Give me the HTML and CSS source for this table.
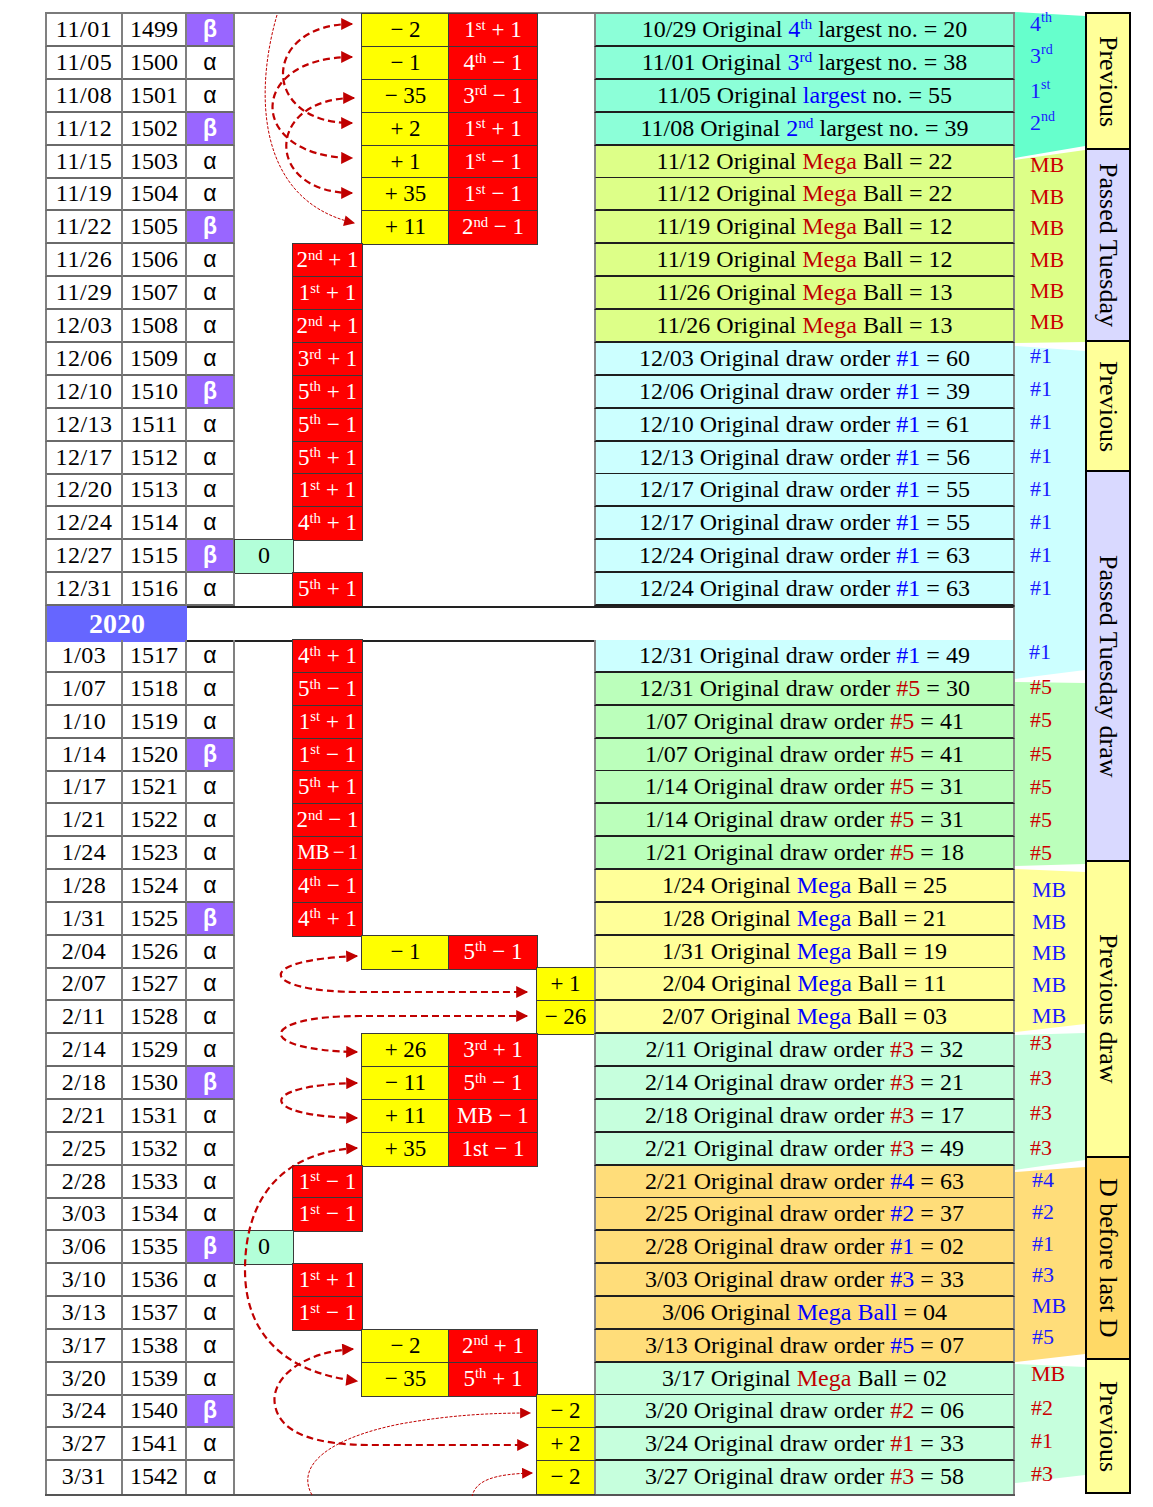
FILE: index.html
```html
<!DOCTYPE html>
<html>
<head>
<meta charset="utf-8">
<title>Draw table</title>
<link rel="stylesheet" href="styles.css">
</head>
<body>
<div class="page">
  <div class="table">
    <div class="sec1">
      <div class="r"><div class="d">11/01</div><div class="n">1499</div><div class="g b">β</div><div class="y6">− 2</div><div class="k7">1<sup>st</sup> + 1</div><div class="t tq">10/29 Original <span class="bl">4<sup>th</sup></span> largest no. = 20</div></div>
      <div class="r"><div class="d">11/05</div><div class="n">1500</div><div class="g">α</div><div class="y6">− 1</div><div class="k7">4<sup>th</sup> − 1</div><div class="t tq">11/01 Original <span class="bl">3<sup>rd</sup></span> largest no. = 38</div></div>
      <div class="r"><div class="d">11/08</div><div class="n">1501</div><div class="g">α</div><div class="y6">− 35</div><div class="k7">3<sup>rd</sup> − 1</div><div class="t tq">11/05 Original <span class="bl">largest</span> no. = 55</div></div>
      <div class="r"><div class="d">11/12</div><div class="n">1502</div><div class="g b">β</div><div class="y6">+ 2</div><div class="k7">1<sup>st</sup> + 1</div><div class="t tq">11/08 Original <span class="bl">2<sup>nd</sup></span> largest no. = 39</div></div>
      <div class="r"><div class="d">11/15</div><div class="n">1503</div><div class="g">α</div><div class="y6">+ 1</div><div class="k7">1<sup>st</sup> − 1</div><div class="t tl">11/12 Original <span class="rd">Mega</span> Ball = 22</div></div>
      <div class="r"><div class="d">11/19</div><div class="n">1504</div><div class="g">α</div><div class="y6">+ 35</div><div class="k7">1<sup>st</sup> − 1</div><div class="t tl">11/12 Original <span class="rd">Mega</span> Ball = 22</div></div>
      <div class="r"><div class="d">11/22</div><div class="n">1505</div><div class="g b">β</div><div class="y6">+ 11</div><div class="k7">2<sup>nd</sup> − 1</div><div class="t tl">11/19 Original <span class="rd">Mega</span> Ball = 12</div></div>
      <div class="r"><div class="d">11/26</div><div class="n">1506</div><div class="g">α</div><div class="k5">2<sup>nd</sup> + 1</div><div class="t tl">11/19 Original <span class="rd">Mega</span> Ball = 12</div></div>
      <div class="r"><div class="d">11/29</div><div class="n">1507</div><div class="g">α</div><div class="k5">1<sup>st</sup> + 1</div><div class="t tl">11/26 Original <span class="rd">Mega</span> Ball = 13</div></div>
      <div class="r"><div class="d">12/03</div><div class="n">1508</div><div class="g">α</div><div class="k5">2<sup>nd</sup> + 1</div><div class="t tl">11/26 Original <span class="rd">Mega</span> Ball = 13</div></div>
      <div class="r"><div class="d">12/06</div><div class="n">1509</div><div class="g">α</div><div class="k5">3<sup>rd</sup> + 1</div><div class="t tc">12/03 Original draw order <span class="bl">#1</span> = 60</div></div>
      <div class="r"><div class="d">12/10</div><div class="n">1510</div><div class="g b">β</div><div class="k5">5<sup>th</sup> + 1</div><div class="t tc">12/06 Original draw order <span class="bl">#1</span> = 39</div></div>
      <div class="r"><div class="d">12/13</div><div class="n">1511</div><div class="g">α</div><div class="k5">5<sup>th</sup> − 1</div><div class="t tc">12/10 Original draw order <span class="bl">#1</span> = 61</div></div>
      <div class="r"><div class="d">12/17</div><div class="n">1512</div><div class="g">α</div><div class="k5">5<sup>th</sup> + 1</div><div class="t tc">12/13 Original draw order <span class="bl">#1</span> = 56</div></div>
      <div class="r"><div class="d">12/20</div><div class="n">1513</div><div class="g">α</div><div class="k5">1<sup>st</sup> + 1</div><div class="t tc">12/17 Original draw order <span class="bl">#1</span> = 55</div></div>
      <div class="r"><div class="d">12/24</div><div class="n">1514</div><div class="g">α</div><div class="k5">4<sup>th</sup> + 1</div><div class="t tc">12/17 Original draw order <span class="bl">#1</span> = 55</div></div>
      <div class="r"><div class="d">12/27</div><div class="n">1515</div><div class="g b">β</div><div class="z">0</div><div class="t tc">12/24 Original draw order <span class="bl">#1</span> = 63</div></div>
      <div class="r"><div class="d">12/31</div><div class="n">1516</div><div class="g">α</div><div class="k5">5<sup>th</sup> + 1</div><div class="t tc">12/24 Original draw order <span class="bl">#1</span> = 63</div></div>
    </div>
    <div class="yr"><div class="yb">2020</div><div class="yw"></div></div>
    <div class="sec2">
      <div class="r"><div class="d">1/03</div><div class="n">1517</div><div class="g">α</div><div class="k5">4<sup>th</sup> + 1</div><div class="t tc">12/31 Original draw order <span class="bl">#1</span> = 49</div></div>
      <div class="r"><div class="d">1/07</div><div class="n">1518</div><div class="g">α</div><div class="k5">5<sup>th</sup> − 1</div><div class="t tg">12/31 Original draw order <span class="rd">#5</span> = 30</div></div>
      <div class="r"><div class="d">1/10</div><div class="n">1519</div><div class="g">α</div><div class="k5">1<sup>st</sup> + 1</div><div class="t tg">1/07 Original draw order <span class="rd">#5</span> = 41</div></div>
      <div class="r"><div class="d">1/14</div><div class="n">1520</div><div class="g b">β</div><div class="k5">1<sup>st</sup> − 1</div><div class="t tg">1/07 Original draw order <span class="rd">#5</span> = 41</div></div>
      <div class="r"><div class="d">1/17</div><div class="n">1521</div><div class="g">α</div><div class="k5">5<sup>th</sup> + 1</div><div class="t tg">1/14 Original draw order <span class="rd">#5</span> = 31</div></div>
      <div class="r"><div class="d">1/21</div><div class="n">1522</div><div class="g">α</div><div class="k5">2<sup>nd</sup> − 1</div><div class="t tg">1/14 Original draw order <span class="rd">#5</span> = 31</div></div>
      <div class="r"><div class="d">1/24</div><div class="n">1523</div><div class="g">α</div><div class="k5 mb">MB − 1</div><div class="t tg">1/21 Original draw order <span class="rd">#5</span> = 18</div></div>
      <div class="r"><div class="d">1/28</div><div class="n">1524</div><div class="g">α</div><div class="k5">4<sup>th</sup> − 1</div><div class="t ty">1/24 Original <span class="bl">Mega</span> Ball = 25</div></div>
      <div class="r"><div class="d">1/31</div><div class="n">1525</div><div class="g b">β</div><div class="k5">4<sup>th</sup> + 1</div><div class="t ty">1/28 Original <span class="bl">Mega</span> Ball = 21</div></div>
      <div class="r"><div class="d">2/04</div><div class="n">1526</div><div class="g">α</div><div class="y6">− 1</div><div class="k7">5<sup>th</sup> − 1</div><div class="t ty">1/31 Original <span class="bl">Mega</span> Ball = 19</div></div>
      <div class="r"><div class="d">2/07</div><div class="n">1527</div><div class="g">α</div><div class="y8">+ 1</div><div class="t ty">2/04 Original <span class="bl">Mega</span> Ball = 11</div></div>
      <div class="r"><div class="d">2/11</div><div class="n">1528</div><div class="g">α</div><div class="y8">− 26</div><div class="t ty">2/07 Original <span class="bl">Mega</span> Ball = 03</div></div>
      <div class="r"><div class="d">2/14</div><div class="n">1529</div><div class="g">α</div><div class="y6">+ 26</div><div class="k7">3<sup>rd</sup> + 1</div><div class="t tm">2/11 Original draw order <span class="rd">#3</span> = 32</div></div>
      <div class="r"><div class="d">2/18</div><div class="n">1530</div><div class="g b">β</div><div class="y6">− 11</div><div class="k7">5<sup>th</sup> − 1</div><div class="t tm">2/14 Original draw order <span class="rd">#3</span> = 21</div></div>
      <div class="r"><div class="d">2/21</div><div class="n">1531</div><div class="g">α</div><div class="y6">+ 11</div><div class="k7">MB − 1</div><div class="t tm">2/18 Original draw order <span class="rd">#3</span> = 17</div></div>
      <div class="r"><div class="d">2/25</div><div class="n">1532</div><div class="g">α</div><div class="y6">+ 35</div><div class="k7">1st − 1</div><div class="t tm">2/21 Original draw order <span class="rd">#3</span> = 49</div></div>
      <div class="r"><div class="d">2/28</div><div class="n">1533</div><div class="g">α</div><div class="k5">1<sup>st</sup> − 1</div><div class="t to">2/21 Original draw order <span class="bl">#4</span> = 63</div></div>
      <div class="r"><div class="d">3/03</div><div class="n">1534</div><div class="g">α</div><div class="k5">1<sup>st</sup> − 1</div><div class="t to">2/25 Original draw order <span class="bl">#2</span> = 37</div></div>
      <div class="r"><div class="d">3/06</div><div class="n">1535</div><div class="g b">β</div><div class="z">0</div><div class="t to">2/28 Original draw order <span class="bl">#1</span> = 02</div></div>
      <div class="r"><div class="d">3/10</div><div class="n">1536</div><div class="g">α</div><div class="k5">1<sup>st</sup> + 1</div><div class="t to">3/03 Original draw order <span class="bl">#3</span> = 33</div></div>
      <div class="r"><div class="d">3/13</div><div class="n">1537</div><div class="g">α</div><div class="k5">1<sup>st</sup> − 1</div><div class="t to">3/06 Original <span class="bl">Mega Ball</span> = 04</div></div>
      <div class="r"><div class="d">3/17</div><div class="n">1538</div><div class="g">α</div><div class="y6">− 2</div><div class="k7">2<sup>nd</sup> + 1</div><div class="t to">3/13 Original draw order <span class="bl">#5</span> = 07</div></div>
      <div class="r"><div class="d">3/20</div><div class="n">1539</div><div class="g">α</div><div class="y6">− 35</div><div class="k7">5<sup>th</sup> + 1</div><div class="t tm">3/17 Original <span class="rd">Mega</span> Ball = 02</div></div>
      <div class="r"><div class="d">3/24</div><div class="n">1540</div><div class="g b">β</div><div class="y8">− 2</div><div class="t tm">3/20 Original draw order <span class="rd">#2</span> = 06</div></div>
      <div class="r"><div class="d">3/27</div><div class="n">1541</div><div class="g">α</div><div class="y8">+ 2</div><div class="t tm">3/24 Original draw order <span class="rd">#1</span> = 33</div></div>
      <div class="r"><div class="d">3/31</div><div class="n">1542</div><div class="g">α</div><div class="y8">− 2</div><div class="t tm">3/27 Original draw order <span class="rd">#3</span> = 58</div></div>
    </div>
  </div>

  <div class="fan">
    <svg width="70" height="1482" viewBox="1015 12 70 1482">
      <polygon fill="#66ffcc" points="1015,12 1085,16 1085,146 1015,158"/>
      <polygon fill="#ddff88" points="1015,160 1085,150 1085,342 1015,343"/>
      <polygon fill="#ccffff" points="1015,346 1085,351 1085,670 1015,679"/>
      <polygon fill="#bbffbb" points="1015,682 1085,683 1085,864 1015,866"/>
      <polygon fill="#ffff99" points="1015,869 1085,872 1085,1024 1015,1032"/>
      <polygon fill="#c6ffdd" points="1015,1035 1085,1033 1085,1160 1015,1170"/>
      <polygon fill="#ffdd7a" points="1015,1172 1085,1167 1085,1354 1015,1362"/>
      <polygon fill="#c6ffdd" points="1015,1364 1085,1367 1085,1475 1015,1483"/>
      <g class="ab blue">
        <text x="1030" y="31">4<tspan class="su" dy="-9">th</tspan></text>
        <text x="1030" y="63">3<tspan class="su" dy="-9">rd</tspan></text>
        <text x="1030" y="98">1<tspan class="su" dy="-9">st</tspan></text>
        <text x="1030" y="130">2<tspan class="su" dy="-9">nd</tspan></text>
      </g>
      <g class="ab red">
        <text x="1030" y="172">MB</text>
        <text x="1030" y="204">MB</text>
        <text x="1030" y="235">MB</text>
        <text x="1030" y="267">MB</text>
        <text x="1030" y="298">MB</text>
        <text x="1030" y="329">MB</text>
      </g>
      <g class="ab blue">
        <text x="1030" y="363">#1</text>
        <text x="1030" y="396">#1</text>
        <text x="1030" y="429">#1</text>
        <text x="1030" y="463">#1</text>
        <text x="1030" y="496">#1</text>
        <text x="1030" y="529">#1</text>
        <text x="1030" y="562">#1</text>
        <text x="1030" y="595">#1</text>
        <text x="1029" y="659">#1</text>
      </g>
      <g class="ab red">
        <text x="1030" y="694">#5</text>
        <text x="1030" y="727">#5</text>
        <text x="1030" y="761">#5</text>
        <text x="1030" y="794">#5</text>
        <text x="1030" y="827">#5</text>
        <text x="1030" y="860">#5</text>
      </g>
      <g class="ab blue">
        <text x="1032" y="897">MB</text>
        <text x="1032" y="929">MB</text>
        <text x="1032" y="960">MB</text>
        <text x="1032" y="992">MB</text>
        <text x="1032" y="1023">MB</text>
      </g>
      <g class="ab red">
        <text x="1030" y="1050">#3</text>
        <text x="1030" y="1085">#3</text>
        <text x="1030" y="1120">#3</text>
        <text x="1030" y="1155">#3</text>
      </g>
      <g class="ab blue">
        <text x="1032" y="1187">#4</text>
        <text x="1032" y="1219">#2</text>
        <text x="1032" y="1251">#1</text>
        <text x="1032" y="1282">#3</text>
        <text x="1032" y="1313">MB</text>
        <text x="1032" y="1344">#5</text>
      </g>
      <g class="ab red">
        <text x="1031" y="1381">MB</text>
        <text x="1031" y="1415">#2</text>
        <text x="1031" y="1448">#1</text>
        <text x="1031" y="1481">#3</text>
      </g>
    </svg>
  </div>

  <div class="labels">
    <div class="lb ly h1"><span>Previous</span></div>
    <div class="lb lv h2"><span>Passed Tuesday</span></div>
    <div class="lb ly h3"><span>Previous</span></div>
    <div class="lb lv h4"><span>Passed Tuesday draw</span></div>
    <div class="lb ly h5"><span>Previous draw</span></div>
    <div class="lb lo h6"><span>D before last D</span></div>
    <div class="lb ly h7"><span>Previous</span></div>
  </div>

  <svg class="arrows" width="1153" height="1507" viewBox="0 0 1153 1507">
    <defs>
      <marker id="ah" viewBox="0 0 10 10" refX="9" refY="5" markerWidth="14" markerHeight="12" markerUnits="userSpaceOnUse" orient="auto-start-reverse">
        <path class="head" d="M0,0 L10,5 L0,10 z"/>
      </marker>
      <marker id="ahs" viewBox="0 0 10 10" refX="9" refY="5" markerWidth="12" markerHeight="11" markerUnits="userSpaceOnUse" orient="auto-start-reverse">
        <path class="head" d="M0,0 L10,5 L0,10 z"/>
      </marker>
    </defs>
    <g class="thick">
      <path d="M 352 24 C 260 24, 260 124, 352 123"/>
      <path d="M 352 57 C 246 57, 246 157, 352 158"/>
      <path d="M 354 98 C 264 98, 264 193, 352 193"/>
      <path d="M 357 956 C 250 960, 260 992, 360 992 L 527 992"/>
      <path d="M 527 1016 L 360 1016 C 258 1016, 252 1050, 357 1052"/>
      <path d="M 357 1083 C 256 1085, 256 1116, 357 1118"/>
      <path d="M 357 1148 C 280 1152, 245 1200, 245 1270 C 245 1330, 280 1372, 357 1381"/>
      <path d="M 353 1349 C 300 1352, 270 1380, 275 1405 C 280 1435, 320 1445, 370 1445 L 528 1445"/>
    </g>
    <g class="thin">
      <path d="M 277 15 C 255 90, 255 200, 354 223"/>
      <path d="M 312 1495 C 295 1465, 330 1438, 400 1424 C 450 1415, 490 1413, 530 1413"/>
      <path d="M 472 1497 C 475 1480, 495 1474, 532 1473"/>
    </g>
  </svg>
</div>
</body>
</html>
```

FILE: styles.css
```css
body {
  margin: 0;
  background: #ffffff;
  font-family: "Liberation Serif", "DejaVu Serif", serif;
  color: #000;
}

.page {
  position: relative;
  display: flex;
  align-items: flex-start;
  padding: 12px 0 0 45px;
}

.table {
  width: 970px;
  flex: none;
  border-top: 2px solid #7a7a7a;
  border-bottom: 2px solid #555;
}

.r {
  display: grid;
  grid-template-columns: 78px 64px 48px 58px 69px 87px 88px 57px 421px;
  height: 32.9px;
}

.sec2 .r {
  height: 32.85px;
}

.sec2 .r:last-child > .d,
.sec2 .r:last-child > .n,
.sec2 .r:last-child > .g,
.sec2 .r:last-child > .t {
  border-bottom: 0;
}

.r > * {
  box-sizing: border-box;
  text-align: center;
  line-height: 31px;
  font-size: 24px;
  white-space: nowrap;
  grid-row: 1;
}

sup {
  font-size: 0.64em;
  vertical-align: baseline;
  position: relative;
  top: -0.5em;
  line-height: 0;
}

.d {
  grid-column: 1;
  border-left: 2px solid #808080;
  letter-spacing: 0.5px;
}

.n {
  grid-column: 2;
}

.g {
  grid-column: 3;
  font-family: "Liberation Sans", "DejaVu Sans", sans-serif;
  font-size: 23px;
}

.d,
.n,
.g {
  border-right: 2px solid #808080;
  border-bottom: 2px solid #6a6a6a;
}

.g.b {
  background: #9966ff;
  color: #ffffff;
  font-weight: bold;
}

.z {
  grid-column: 4;
  background: #b3ffd9;
}

.k5 {
  grid-column: 5;
}

.y6 {
  grid-column: 6;
}

.k7 {
  grid-column: 7;
}

.y8 {
  grid-column: 8;
}

.k5,
.k7 {
  background: #ff0000;
  color: #ffffff;
  font-size: 23px;
}

.y6,
.y8 {
  background: #ffff00;
  font-size: 23px;
}

.r > .mb {
  letter-spacing: -0.5px;
  word-spacing: -1px;
  font-size: 21px;
}

.z,
.k5,
.y6,
.k7,
.y8 {
  box-shadow: 0 0 0 1px #3a3a3a;
}

.t {
  grid-column: 9;
  border-left: 2px solid #888888;
  border-right: 2px solid #888888;
  border-bottom: 2px solid #1e1e1e;
}

.tq { background: #8cffd8; }
.tl { background: #ddff88; }
.tc { background: #ccffff; }
.tg { background: #bbffbb; }
.ty { background: #ffff99; }
.tm { background: #c6ffdd; }
.to { background: #ffdd7a; }

.bl { color: #0000ff; }
.rd { color: #c00000; }

/* 2020 row */
.yr {
  display: grid;
  grid-template-columns: 142px 828px;
  height: 34px;
}

.yb {
  box-sizing: border-box;
  background: #6666ff;
  color: #ffffff;
  font-weight: bold;
  font-size: 28px;
  text-align: center;
  line-height: 36px;
  border-left: 2px solid #808080;
}

.yw {
  box-sizing: border-box;
  border-top: 2px solid #222;
  border-bottom: 2px solid #222;
  border-right: 2px solid #888888;
}

/* fan column */
.fan {
  width: 70px;
  height: 1482px;
  flex: none;
}

.fan svg {
  display: block;
  overflow: visible;
}

.ab {
  font-family: "Liberation Serif", "DejaVu Serif", serif;
  font-size: 22px;
}

.ab.blue { fill: #1a1aff; }
.ab.red { fill: #cc0000; }

.su {
  font-size: 14px;
}

/* labels */
.labels {
  width: 46px;
  flex: none;
  display: flex;
  flex-direction: column;
}

.lb {
  box-sizing: border-box;
  border: 2px solid #000;
  display: flex;
  align-items: center;
  justify-content: center;
  font-size: 26px;
}

.lb + .lb {
  border-top: 0;
}

.lb span {
  writing-mode: vertical-rl;
  white-space: nowrap;
}

.ly { background: #ffff99; }
.lv { background: #d9d9ff; }
.lo { background: #ffd966; }

.h1 { height: 138px; }
.h2 { height: 192px; }
.h3 { height: 130px; }
.h4 { height: 390px; }
.h5 { height: 296px; }
.h6 { height: 202px; }
.h7 { height: 134px; }

/* arrows overlay */
.arrows {
  position: absolute;
  left: 0;
  top: 0;
  pointer-events: none;
}

.thick path,
.thin path {
  fill: none;
  stroke: #c00000;
}

.arrows .head {
  fill: #c00000;
  stroke: none;
}

.thick path {
  stroke-width: 2.2;
  stroke-dasharray: 7 4;
  marker-start: url(#ah);
  marker-end: url(#ah);
}

.thin path {
  stroke-width: 1;
  stroke-dasharray: 3 1.5;
  marker-end: url(#ahs);
}
```
